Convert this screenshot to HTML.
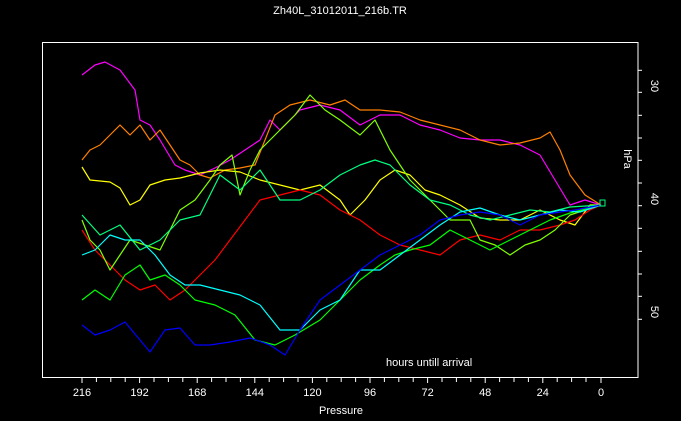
<!DOCTYPE html>
<html><head><meta charset="utf-8"><style>
html,body{margin:0;padding:0;background:#000;width:681px;height:421px;overflow:hidden}
svg{display:block}
text{font-family:"Liberation Sans",sans-serif;font-size:11px;fill:#fff}
polyline{fill:none;stroke-width:1.2;stroke-linejoin:round}
</style></head><body>
<svg width="681" height="421" viewBox="0 0 681 421">
<rect x="0" y="0" width="681" height="421" fill="#000"/>
<text x="340" y="14" text-anchor="middle">Zh40L_31012011_216b.TR</text>
<rect x="42.5" y="42.5" width="595.5" height="335" fill="none" stroke="#fff" stroke-width="1"/>
<g stroke="#fff" stroke-width="1">
<line x1="82" y1="378" x2="82" y2="383"/><line x1="96.4" y1="378" x2="96.4" y2="382"/><line x1="110.8" y1="378" x2="110.8" y2="382"/><line x1="125.2" y1="378" x2="125.2" y2="382"/>
<line x1="139.6" y1="378" x2="139.6" y2="383"/><line x1="154" y1="378" x2="154" y2="382"/><line x1="168.4" y1="378" x2="168.4" y2="382"/><line x1="182.8" y1="378" x2="182.8" y2="382"/>
<line x1="197.2" y1="378" x2="197.2" y2="383"/><line x1="211.6" y1="378" x2="211.6" y2="382"/><line x1="226" y1="378" x2="226" y2="382"/><line x1="240.4" y1="378" x2="240.4" y2="382"/>
<line x1="254.8" y1="378" x2="254.8" y2="383"/><line x1="269.2" y1="378" x2="269.2" y2="382"/><line x1="283.6" y1="378" x2="283.6" y2="382"/><line x1="298" y1="378" x2="298" y2="382"/>
<line x1="312.4" y1="378" x2="312.4" y2="383"/><line x1="326.8" y1="378" x2="326.8" y2="382"/><line x1="341.2" y1="378" x2="341.2" y2="382"/><line x1="355.6" y1="378" x2="355.6" y2="382"/>
<line x1="370" y1="378" x2="370" y2="383"/><line x1="384.4" y1="378" x2="384.4" y2="382"/><line x1="398.8" y1="378" x2="398.8" y2="382"/><line x1="413.2" y1="378" x2="413.2" y2="382"/>
<line x1="427.6" y1="378" x2="427.6" y2="383"/><line x1="442" y1="378" x2="442" y2="382"/><line x1="456.4" y1="378" x2="456.4" y2="382"/><line x1="470.8" y1="378" x2="470.8" y2="382"/>
<line x1="485.2" y1="378" x2="485.2" y2="383"/><line x1="499.6" y1="378" x2="499.6" y2="382"/><line x1="514" y1="378" x2="514" y2="382"/><line x1="528.4" y1="378" x2="528.4" y2="382"/>
<line x1="542.8" y1="378" x2="542.8" y2="383"/><line x1="557.2" y1="378" x2="557.2" y2="382"/><line x1="571.6" y1="378" x2="571.6" y2="382"/><line x1="586" y1="378" x2="586" y2="382"/>
<line x1="601" y1="378" x2="601" y2="383"/>
<line x1="638" y1="70.3" x2="642" y2="70.3"/><line x1="638" y1="92.3" x2="642" y2="92.3"/><line x1="638" y1="115.3" x2="642" y2="115.3"/><line x1="638" y1="138" x2="642" y2="138"/><line x1="638" y1="160.3" x2="642" y2="160.3"/><line x1="638" y1="183" x2="642" y2="183"/><line x1="638" y1="205.7" x2="642" y2="205.7"/><line x1="638" y1="228.3" x2="642" y2="228.3"/><line x1="638" y1="251.3" x2="642" y2="251.3"/><line x1="638" y1="274" x2="642" y2="274"/><line x1="638" y1="296.3" x2="642" y2="296.3"/><line x1="638" y1="319.3" x2="642" y2="319.3"/>
</g>
<g text-anchor="middle">
<text x="82" y="396">216</text><text x="139.6" y="396">192</text><text x="197.2" y="396">168</text><text x="254.8" y="396">144</text><text x="312.4" y="396">120</text><text x="370" y="396">96</text><text x="427.6" y="396">72</text><text x="485.2" y="396">48</text><text x="542.8" y="396">24</text><text x="601" y="396">0</text>
<text x="341" y="414">Pressure</text>
<text transform="translate(651,86) rotate(90)">30</text>
<text transform="translate(651,199) rotate(90)">40</text>
<text transform="translate(651,312) rotate(90)">50</text>
<text transform="translate(624,159) rotate(90)">hPa</text>
</g>
<text x="386" y="366">hours untill arrival</text>
<polyline stroke="#ff00ff" points="82,75 95,65 105,62 120,70 135,90 140,120 150,125 160,140 175,165 185,170 200,175 215,168 230,160 245,150 260,140 270,120 280,130 300,110 320,105 340,110 360,125 380,115 400,115 420,125 440,130 460,138 480,140 500,140 520,145 540,155 555,180 570,205 585,200 601,205"/>
<polyline stroke="#ff8000" points="82,160 90,150 100,145 110,135 120,125 130,135 140,125 150,140 160,130 170,145 180,160 190,165 200,175 210,178 225,170 240,168 255,165 265,140 275,115 290,105 310,100 330,105 345,100 360,110 380,110 400,112 420,120 440,125 460,130 480,140 500,145 520,143 540,138 550,132 560,150 570,175 585,195 601,205"/>
<polyline stroke="#ffff00" points="82,167 90,180 110,182 120,188 130,205 140,200 150,185 165,180 180,178 200,173 220,170 240,172 260,180 280,185 300,190 320,185 340,200 350,215 365,200 380,180 395,170 410,175 425,190 440,195 460,205 480,218 500,220 520,220 540,210 560,220 575,225 590,205 601,205"/>
<polyline stroke="#ff0000" points="82,230 95,250 110,265 125,280 140,290 155,285 170,300 185,290 200,275 215,260 230,240 245,220 260,200 280,195 300,190 320,195 340,210 360,220 380,235 400,245 420,250 440,255 460,240 480,235 500,240 520,230 540,230 560,225 575,220 590,210 601,205"/>
<polyline stroke="#80ff00" points="82,220 90,240 100,250 110,270 120,255 130,240 145,245 160,250 170,230 180,210 195,200 210,180 220,165 232,155 240,195 250,170 260,150 270,140 280,130 295,115 310,95 325,110 340,120 360,135 375,120 390,150 410,180 430,200 450,220 470,220 480,240 495,245 510,255 525,245 540,240 555,230 570,215 585,210 601,205"/>
<polyline stroke="#00ff00" points="82,300 95,290 110,300 125,275 140,265 150,280 165,275 180,285 195,300 215,305 235,315 255,340 275,345 295,335 320,320 340,300 360,280 380,265 395,255 410,250 430,245 450,230 470,240 490,250 510,240 530,230 550,220 570,213 601,205"/>
<polyline stroke="#00ff80" points="82,215 100,235 120,225 140,250 160,240 180,220 200,215 220,175 240,190 260,170 280,200 300,200 320,190 340,175 360,165 375,160 390,165 410,185 430,200 450,205 470,215 490,220 510,215 530,210 550,212 570,207 601,205"/>
<polyline stroke="#00ffff" points="82,255 95,250 110,235 125,240 140,240 155,255 170,275 185,285 200,285 220,290 240,295 260,305 280,330 300,330 320,310 340,300 360,270 380,270 400,255 420,240 440,225 460,212 480,208 500,215 520,220 540,215 560,210 580,212 601,205"/>
<polyline stroke="#0000ff" points="82,325 95,335 110,330 125,322 140,340 150,352 165,330 180,328 195,345 210,345 230,342 250,338 270,345 285,355 300,330 320,300 340,285 360,270 380,255 400,245 420,235 440,220 460,215 480,212 500,215 520,225 540,215 560,212 575,210 601,205"/>
<rect x="600" y="200" width="5" height="6" fill="none" stroke="#00ff80" stroke-width="1"/>
</svg>
</body></html>
